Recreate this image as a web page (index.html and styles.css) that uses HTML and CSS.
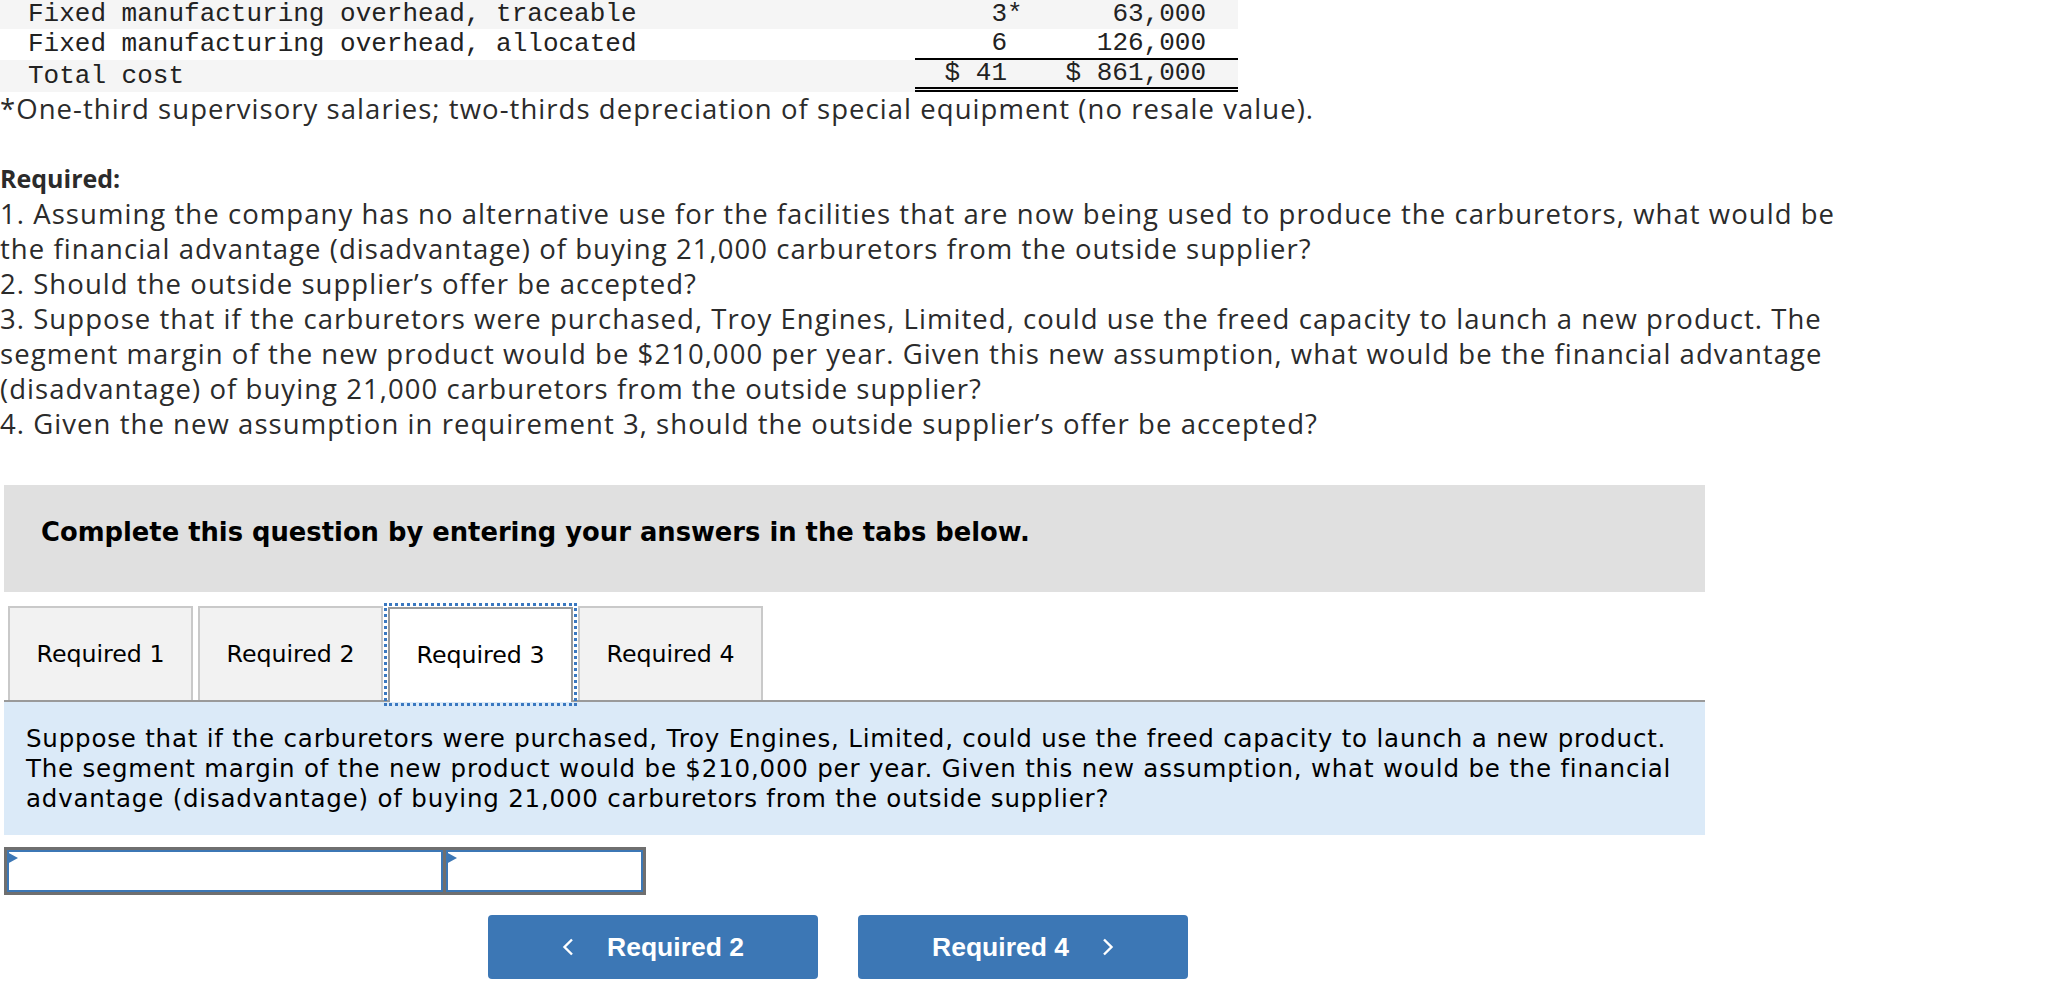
FILE: index.html
```html
<!DOCTYPE html>
<html lang="en">
<head>
<meta charset="utf-8">
<title>Troy Engines</title>
<link rel="stylesheet" href="styles.css">
</head>
<body>
<div class="page">
  <table class="cost">
    <tr class="shaded">
      <td class="lbl">Fixed manufacturing overhead, traceable</td>
      <td class="c1">3<span class="ast">*</span></td>
      <td class="c2">63,000</td>
    </tr>
    <tr>
      <td class="lbl">Fixed manufacturing overhead, allocated</td>
      <td class="c1 under">6</td>
      <td class="c2 under">126,000</td>
    </tr>
    <tr class="shaded">
      <td class="lbl">Total cost</td>
      <td class="c1 dbl">$ 41</td>
      <td class="c2 dbl">$ 861,000</td>
    </tr>
  </table>
  <p class="foot">*One-third supervisory salaries; two-thirds depreciation of special equipment (no resale value).</p>

  <div class="req">
    <div class="req-title">Required:</div>
    <div>1. Assuming the company has no alternative use for the facilities that are now being used to produce the carburetors, what would be<br>the financial advantage (disadvantage) of buying 21,000 carburetors from the outside supplier?</div>
    <div>2. Should the outside supplier’s offer be accepted?</div>
    <div>3. Suppose that if the carburetors were purchased, Troy Engines, Limited, could use the freed capacity to launch a new product. The<br>segment margin of the new product would be $210,000 per year. Given this new assumption, what would be the financial advantage<br>(disadvantage) of buying 21,000 carburetors from the outside supplier?</div>
    <div>4. Given the new assumption in requirement 3, should the outside supplier’s offer be accepted?</div>
  </div>

  <div class="instruct">Complete this question by entering your answers in the tabs below.</div>

  <div class="tabs">
    <div class="tab">Required 1</div>
    <div class="tab">Required 2</div>
    <div class="tab active">Required 3</div>
    <div class="tab">Required 4</div>
  </div>

  <div class="panel">Suppose that if the carburetors were purchased, Troy Engines, Limited, could use the freed capacity to launch a new product.<br>The segment margin of the new product would be $210,000 per year. Given this new assumption, what would be the financial<br>advantage (disadvantage) of buying 21,000 carburetors from the outside supplier?</div>

  <div class="answer">
    <div class="cell cell-wide"></div>
    <div class="cell cell-narrow"></div>
  </div>

  <div class="nav">
    <div class="btn">
      <svg class="chev" width="12" height="18" viewBox="0 0 12 18"><polyline points="10,1.5 2.5,9 10,16.5" fill="none" stroke="#fff" stroke-width="2.4"/></svg>
      <span>Required 2</span>
    </div>
    <div class="btn">
      <span>Required 4</span>
      <svg class="chev" width="12" height="18" viewBox="0 0 12 18"><polyline points="2,1.5 9.5,9 2,16.5" fill="none" stroke="#fff" stroke-width="2.4"/></svg>
    </div>
  </div>
</div>
</body>
</html>
```

FILE: styles.css
```css
body {
  margin: 0;
  background: #fff;
}

.page {
  width: 2048px;
}

/* cost table */
.cost {
  border-collapse: separate;
  border-spacing: 0;
  width: 1238px;
  font-family: "Liberation Mono", monospace;
  font-size: 26px;
  color: #222;
}

.cost td {
  padding: 0;
  line-height: 29px;
  white-space: pre;
  vertical-align: middle;
}

.cost tr.shaded td {
  background: #f5f5f5;
}

.cost td.lbl {
  padding-left: 28px;
}

.cost td.c1 {
  width: 92px;
  padding-right: 30px;
  text-align: right;
}

.cost td.c2 {
  width: 169px;
  padding-right: 32px;
  text-align: right;
}

.ast {
  margin-right: -1ch;
}

.cost td.under {
  border-bottom: 2px solid #000;
}

.cost td.dbl {
  border-bottom: 5px double #000;
  line-height: 27px;
}

/* question text */
.foot {
  margin: 0;
  font-family: "Open Sans", sans-serif;
  font-size: 27.5px;
  letter-spacing: 1.05px;
  line-height: 33px;
  color: #2b2b2b;
  white-space: nowrap;
}

.req {
  margin-top: 36px;
  font-family: "Open Sans", sans-serif;
  font-size: 27.5px;
  letter-spacing: 1.05px;
  line-height: 35px;
  color: #2b2b2b;
  white-space: nowrap;
}

.req-title {
  font-weight: 700;
  font-size: 25px;
  letter-spacing: 0;
}

/* instructions */
.instruct {
  box-sizing: border-box;
  margin: 44px 0 0 4px;
  width: 1701px;
  height: 107px;
  padding: 32px 0 0 37px;
  background: #e0e0e0;
  font-family: "DejaVu Sans", Verdana, sans-serif;
  font-weight: 700;
  font-size: 25.8px;
  line-height: 30px;
  color: #000;
}

/* tabs */
.tabs {
  box-sizing: border-box;
  display: flex;
  gap: 5px;
  margin: 14px 0 0 4px;
  width: 1701px;
  padding-left: 4px;
  border-bottom: 2px solid #9a9a9a;
}

.tab {
  box-sizing: border-box;
  width: 185px;
  height: 94px;
  display: flex;
  align-items: center;
  justify-content: center;
  border: 2px solid #c9c9c9;
  border-bottom: none;
  background: #f2f2f2;
  font-family: "DejaVu Sans", Verdana, sans-serif;
  font-size: 23.7px;
  color: #000;
}

.tab.active {
  height: 95px;
  margin-top: 1px;
  margin-bottom: -2px;
  padding-bottom: 2px;
  background: #fff;
  border-color: #9a9a9a;
  outline: 3px dotted #3a78c0;
  outline-offset: 1px;
}

/* panel */
.panel {
  box-sizing: border-box;
  margin-left: 4px;
  width: 1701px;
  padding: 22px 22px 21px;
  background: #dbeaf8;
  font-family: "DejaVu Sans", Verdana, sans-serif;
  font-size: 24.5px;
  letter-spacing: 0.8px;
  line-height: 30px;
  color: #000;
  white-space: nowrap;
}

/* answer inputs */
.answer {
  box-sizing: border-box;
  display: flex;
  gap: 3px;
  margin: 12px 0 0 4px;
  width: 642px;
  height: 48px;
  border: 3px solid #6f6f6f;
  background: #6f6f6f;
}

.cell {
  position: relative;
  box-sizing: border-box;
  height: 42px;
  background: #fff;
  border: 2px solid #3c77b5;
}

.cell::before {
  content: "";
  position: absolute;
  left: -2px;
  top: 0;
  width: 0;
  height: 0;
  border-left: 11px solid #3c77b5;
  border-top: 6.5px solid transparent;
  border-bottom: 6.5px solid transparent;
}

.cell-wide {
  width: 436px;
}

.cell-narrow {
  width: 197px;
}

/* nav buttons */
.nav {
  display: flex;
  gap: 40px;
  margin-top: 20px;
  padding-left: 488px;
}

.btn {
  box-sizing: border-box;
  width: 330px;
  height: 64px;
  display: flex;
  align-items: center;
  justify-content: center;
  gap: 33px;
  border-radius: 4px;
  background: #3c77b5;
  color: #fff;
  font-family: "Liberation Sans", Arial, sans-serif;
  font-weight: 700;
  font-size: 26.5px;
}

.chev {
  display: block;
}
```
